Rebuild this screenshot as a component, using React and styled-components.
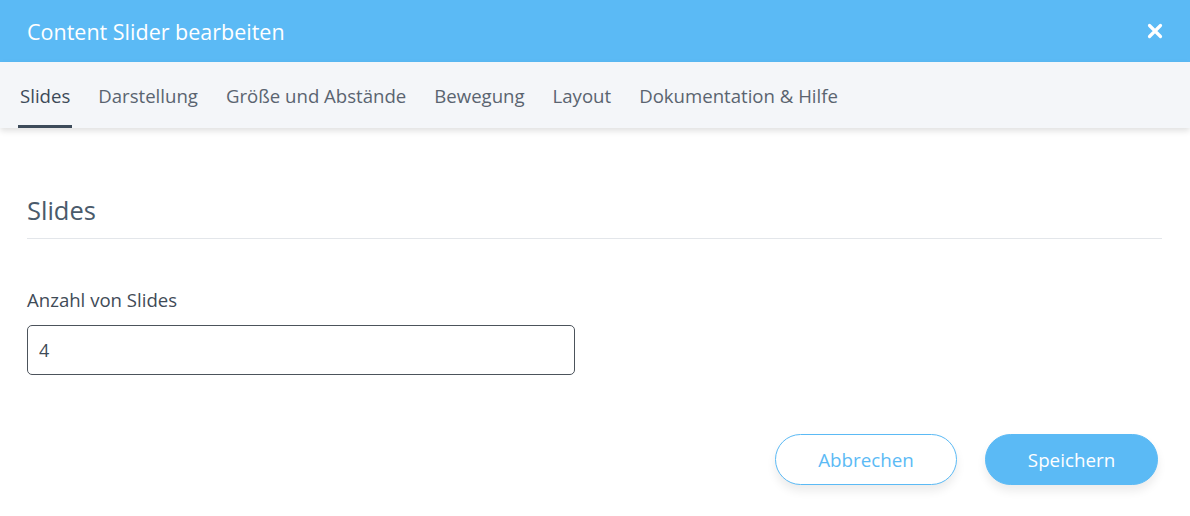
import React, { useState } from 'react';
import styled, { createGlobalStyle } from 'styled-components';

const GlobalStyle = createGlobalStyle`
  html, body {
    margin: 0;
    padding: 0;
    background: #ffffff;
    font-family: "Open Sans", "Noto Sans", sans-serif;
  }
  * { box-sizing: border-box; }
`;

const Modal = styled.div`
  width: 1190px;
  height: 516px;
  background: #fff;
  display: flex;
  flex-direction: column;
`;

// blauer Kopfbereich
const Header = styled.div`
  height: 62px;
  background: #5bbaf5;
  display: flex;
  align-items: center;
  justify-content: space-between;
  padding: 0 26px 0 27px;
`;

const Title = styled.h1`
  margin: 0;
  font-size: 21.5px;
  font-weight: 400;
  color: #fff;
`;

const CloseButton = styled.button`
  border: none;
  background: none;
  padding: 0;
  width: 18px;
  height: 18px;
  cursor: pointer;
  display: flex;
  align-items: center;
  justify-content: center;
`;

// Tab-Leiste
const TabBar = styled.nav`
  height: 66px;
  background: #f4f6f9;
  display: flex;
  align-items: stretch;
  padding-left: 18px;
  gap: 24px;
  box-shadow: 0 3px 6px rgba(0, 0, 0, 0.12);
  position: relative;
  z-index: 1;
`;

const Tab = styled.button`
  border: none;
  background: none;
  padding: 3px 2px 0;
  font-family: inherit;
  font-size: 18.6px;
  color: ${({ $active }) => ($active ? '#3c4a58' : '#5a6470')};
  display: flex;
  align-items: center;
  border-bottom: 3px solid ${({ $active }) => ($active ? '#3d4b5a' : 'transparent')};
  cursor: pointer;
`;

const Body = styled.div`
  flex: 1;
  padding: 66px 28px 0 27px;
  display: flex;
  flex-direction: column;
`;

const SectionTitle = styled.h2`
  margin: 0;
  font-size: 25.5px;
  font-weight: 400;
  color: #4a5a6b;
  padding-bottom: 12px;
  border-bottom: 1px solid #e3e6ea;
  line-height: 32px;
`;

const Field = styled.div`
  margin-top: 48px;
  display: flex;
  flex-direction: column;
  gap: 13px;
`;

const Label = styled.label`
  font-size: 18.6px;
  color: #3f4b57;
`;

const Input = styled.input`
  width: 548px;
  height: 50px;
  border: 1px solid #4c535b;
  border-radius: 5px;
  padding: 0 11px;
  font-family: inherit;
  font-size: 18px;
  color: #3f4b57;
  outline: none;
`;

const Footer = styled.div`
  display: flex;
  justify-content: flex-end;
  gap: 28px;
  margin-top: 59px;
  padding-right: 4px;
`;

const Button = styled.button`
  height: 51px;
  width: ${({ $w }) => $w}px;
  border-radius: 26px;
  font-family: inherit;
  font-size: 18.8px;
  cursor: pointer;
  border: 1px solid #5bbaf5;
  background: ${({ $primary }) => ($primary ? '#5bbaf5' : '#fff')};
  color: ${({ $primary }) => ($primary ? '#fff' : '#5bbaf5')};
  box-shadow: 0 6px 10px rgba(0, 0, 0, 0.08);
`;

const tabs = ['Slides', 'Darstellung', 'Größe und Abstände', 'Bewegung', 'Layout', 'Dokumentation & Hilfe'];

export default function App() {
  const [active, setActive] = useState('Slides');
  const [count, setCount] = useState('4');

  return (
    <Modal>
      <GlobalStyle />
      <Header>
        <Title>Content Slider bearbeiten</Title>
        <CloseButton aria-label="Schließen">
          <svg width="16" height="16" viewBox="0 0 16 16">
            <path d="M2.5 2.5 L13.5 13.5 M13.5 2.5 L2.5 13.5" stroke="#fff" strokeWidth="3.2" strokeLinecap="round" />
          </svg>
        </CloseButton>
      </Header>
      <TabBar>
        {tabs.map((t) => (
          <Tab key={t} $active={active === t} onClick={() => setActive(t)}>
            {t}
          </Tab>
        ))}
      </TabBar>
      <Body>
        <SectionTitle>Slides</SectionTitle>
        <Field>
          <Label>Anzahl von Slides</Label>
          <Input value={count} onChange={(e) => setCount(e.target.value)} />
        </Field>
        <Footer>
          <Button $w={182}>Abbrechen</Button>
          <Button $w={173} $primary>Speichern</Button>
        </Footer>
      </Body>
    </Modal>
  );
}
